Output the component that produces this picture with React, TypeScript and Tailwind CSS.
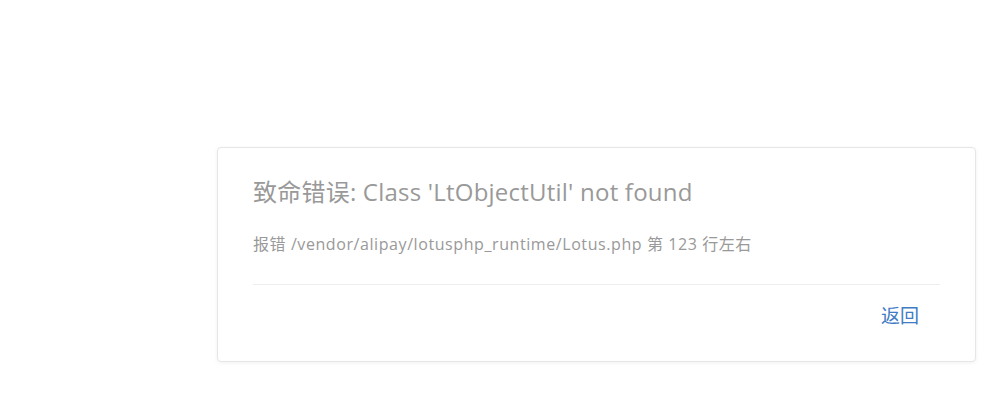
export default function App() {
  return (
    <div className="w-[1000px] h-[394px] bg-white relative" style={{ fontFamily: '"Segoe UI", "Open Sans", "Noto Sans CJK SC", sans-serif' }}>
      <div className="pt-[147px] pl-[217px]">
        <div className="w-[759px] h-[215px] rounded-[4px] border border-[#e6e6e6] bg-white shadow-[0_1px_4px_rgba(0,0,0,0.06)] px-[35px]">
          <div className="pt-[28px] text-[24px] leading-[32px] text-[#999999] tracking-[0.22px]">致命错误: Class 'LtObjectUtil' not found</div>
          <div className="mt-[24px] text-[16px] leading-[24px] text-[#999999] tracking-[0.58px]">报错 /vendor/alipay/lotusphp_runtime/Lotus.php 第 123 行左右</div>
          <div className="mt-[28px] border-t border-[#eeeeee]" />
          <div className="flex justify-end pt-[18px] pr-[21px]">
            <a className="text-[19px] leading-[26px] text-[#3f7cc4]">返回</a>
          </div>
        </div>
      </div>
    </div>
  );
}
